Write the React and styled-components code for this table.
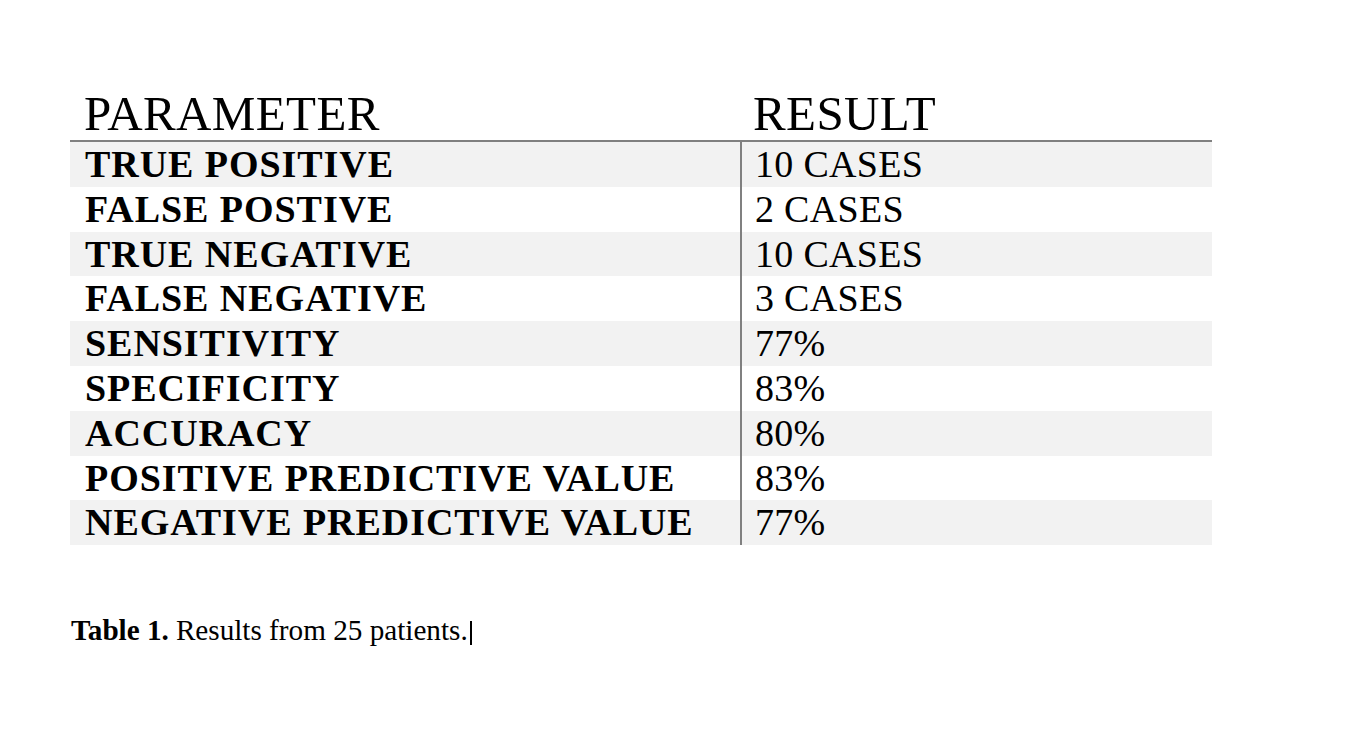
import React from "react";
import styled, { createGlobalStyle } from "styled-components";

const GlobalStyle = createGlobalStyle`
  html, body {
    margin: 0;
    padding: 0;
    background: #ffffff;
  }
  body {
    font-family: "Liberation Serif", "Times New Roman", serif;
    color: #000000;
  }
`;

const Page = styled.div`
  width: 1356px;
  height: 736px;
  padding: 87px 0 0 70px;
  box-sizing: border-box;
  background: #ffffff;
`;

const Table = styled.div`
  width: 1142px;
  display: flex;
  flex-direction: column;
`;

const HeadRow = styled.div`
  display: grid;
  grid-template-columns: 670px 472px;
  height: 53px;
  border-bottom: 2px solid #808080;
`;

const HeadCell = styled.div`
  font-size: 49px;
  letter-spacing: 0.4px;
  line-height: 53px;
  padding-left: ${(p) => (p.$right ? "13px" : "14px")};
  white-space: nowrap;
`;

const Row = styled.div`
  display: grid;
  grid-template-columns: 670px 472px;
  height: 44.8px;
  background: ${(p) => (p.$shaded ? "#f2f2f2" : "#ffffff")};
`;

const LabelCell = styled.div`
  font-size: 38px;
  font-weight: bold;
  letter-spacing: 0.95px;
  line-height: 44.8px;
  padding-left: 15px;
  white-space: nowrap;
`;

const ValueCell = styled.div`
  font-size: 38px;
  letter-spacing: 0.3px;
  line-height: 44.8px;
  padding-left: 13px;
  border-left: 2px solid #808080;
  white-space: nowrap;
`;

const Caption = styled.p`
  margin: 70px 0 0 1px;
  font-size: 29.2px;
  line-height: 31px;
  white-space: nowrap;
  display: flex;
  align-items: center;
`;

const Bold = styled.b`
  font-weight: bold;
  margin-right: 7px;
`;

const Cursor = styled.span`
  display: inline-block;
  width: 2px;
  height: 24px;
  background: #000000;
  margin-left: 2px;
  margin-top: 4px;
`;

const rows = [
  ["TRUE POSITIVE", "10 CASES"],
  ["FALSE POSTIVE", "2 CASES"],
  ["TRUE NEGATIVE", "10 CASES"],
  ["FALSE NEGATIVE", "3 CASES"],
  ["SENSITIVITY", "77%"],
  ["SPECIFICITY", "83%"],
  ["ACCURACY", "80%"],
  ["POSITIVE PREDICTIVE VALUE", "83%"],
  ["NEGATIVE PREDICTIVE VALUE", "77%"],
];

const App = () => {
  return (
    <Page>
      <GlobalStyle />
      <Table>
        <HeadRow>
          <HeadCell>PARAMETER</HeadCell>
          <HeadCell $right>RESULT</HeadCell>
        </HeadRow>
        {rows.map(([label, value], i) => (
          <Row key={label} $shaded={i % 2 === 0}>
            <LabelCell>{label}</LabelCell>
            <ValueCell>{value}</ValueCell>
          </Row>
        ))}
      </Table>
      <Caption>
        <Bold>Table 1.</Bold>
        Results from 25 patients.
        <Cursor />
      </Caption>
    </Page>
  );
};

export default App;
